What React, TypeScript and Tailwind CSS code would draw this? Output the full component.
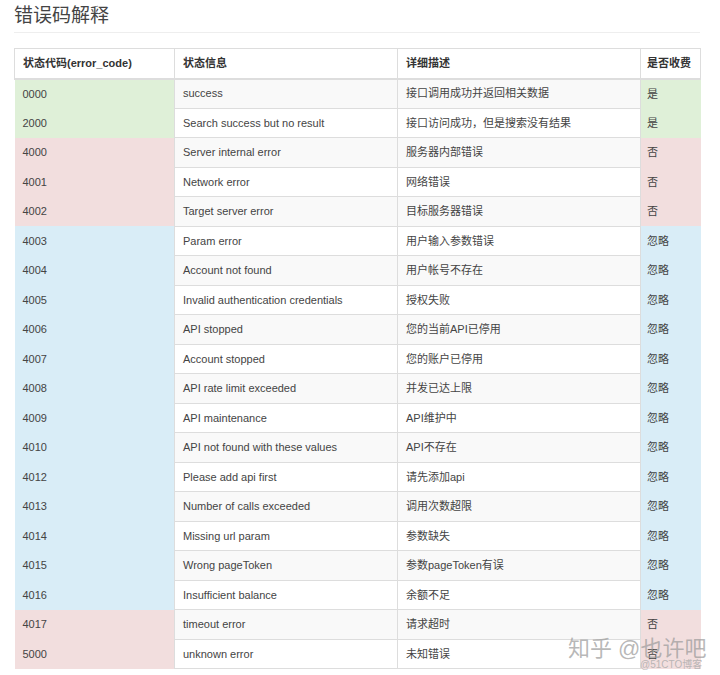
const rows: [string, string, string, string, "g" | "r" | "b"][] = [
  ["0000", "success", "接口调用成功并返回相关数据", "是", "g"],
  ["2000", "Search success but no result", "接口访问成功，但是搜索没有结果", "是", "g"],
  ["4000", "Server internal error", "服务器内部错误", "否", "r"],
  ["4001", "Network error", "网络错误", "否", "r"],
  ["4002", "Target server error", "目标服务器错误", "否", "r"],
  ["4003", "Param error", "用户输入参数错误", "忽略", "b"],
  ["4004", "Account not found", "用户帐号不存在", "忽略", "b"],
  ["4005", "Invalid authentication credentials", "授权失败", "忽略", "b"],
  ["4006", "API stopped", "您的当前API已停用", "忽略", "b"],
  ["4007", "Account stopped", "您的账户已停用", "忽略", "b"],
  ["4008", "API rate limit exceeded", "并发已达上限", "忽略", "b"],
  ["4009", "API maintenance", "API维护中", "忽略", "b"],
  ["4010", "API not found with these values", "API不存在", "忽略", "b"],
  ["4012", "Please add api first", "请先添加api", "忽略", "b"],
  ["4013", "Number of calls exceeded", "调用次数超限", "忽略", "b"],
  ["4014", "Missing url param", "参数缺失", "忽略", "b"],
  ["4015", "Wrong pageToken", "参数pageToken有误", "忽略", "b"],
  ["4016", "Insufficient balance", "余额不足", "忽略", "b"],
  ["4017", "timeout error", "请求超时", "否", "r"],
  ["5000", "unknown error", "未知错误", "否", "r"],
]

const bg = { g: "bg-[#dff0d8]", r: "bg-[#f2dede]", b: "bg-[#d9edf7]" }

export default function App() {
  return (
    <div
      className="relative w-[720px] h-[675px] bg-white overflow-hidden text-[#444]"
      style={{ fontFamily: '"Liberation Sans", "Noto Sans CJK SC", sans-serif' }}
    >
      <div className="pl-[14px] pr-[20px]">
        <h2 className="pt-[4px] pb-[4px] text-[19px] leading-[24px] text-[#444] border-b border-[#eee]">错误码解释</h2>
        <table className="mt-[15px] w-[686px] border-collapse text-[11px] table-fixed whitespace-nowrap">
          <colgroup>
            <col className="w-[160px]" />
            <col className="w-[223px]" />
            <col className="w-[243px]" />
            <col className="w-[60px]" />
          </colgroup>
          <thead>
            <tr className="h-[30px] font-bold text-left text-[#333]">
              <th className="px-[8px] border border-[#ddd] border-b-2">状态代码(error_code)</th>
              <th className="px-[8px] border border-[#ddd] border-b-2">状态信息</th>
              <th className="px-[8px] border border-[#ddd] border-b-2">详细描述</th>
              <th className="px-[6px] border border-[#ddd] border-b-2">是否收费</th>
            </tr>
          </thead>
          <tbody>
            {rows.map(([code, msg, desc, fee, c], i) => (
              <tr key={code} className="h-[29.5px]">
                <td className={`px-[8px] ${bg[c]}`}>{code}</td>
                <td className={`px-[8px] border border-[#ddd] ${i % 2 === 0 ? "bg-[#f9f9f9]" : "bg-white"}`}>{msg}</td>
                <td className={`px-[8px] border border-[#ddd] ${i % 2 === 0 ? "bg-[#f9f9f9]" : "bg-white"}`}>{desc}</td>
                <td className={`px-[6px] ${bg[c]}`}>{fee}</td>
              </tr>
            ))}
          </tbody>
        </table>
      </div>
      <div className="absolute left-[568px] top-[632px] text-[22px] text-[#999]/70 whitespace-nowrap">知乎 @也许吧</div>
      <div className="absolute left-[640px] top-[657px] text-[10px] text-[#aaa]/80 whitespace-nowrap">@51CTO博客</div>
    </div>
  )
}
